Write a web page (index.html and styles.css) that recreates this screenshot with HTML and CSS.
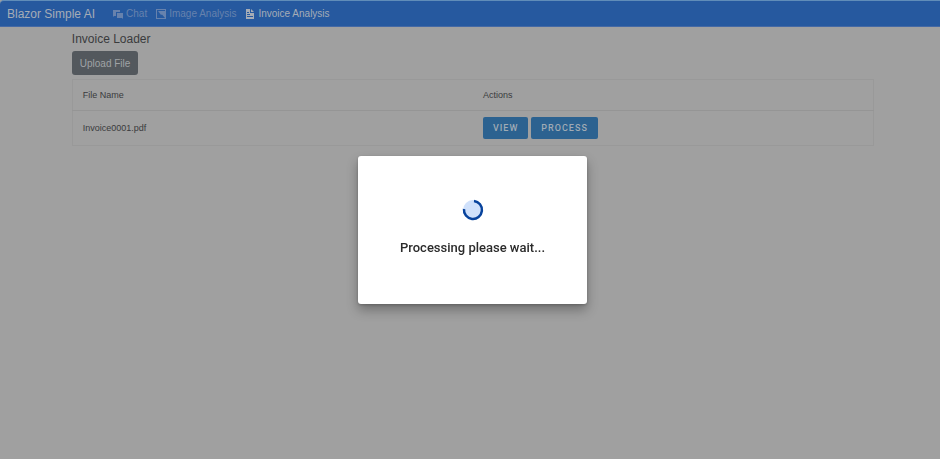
FILE: index.html
```html
<!DOCTYPE html>
<html lang="en">
<head>
<meta charset="utf-8">
<meta name="viewport" content="width=device-width, initial-scale=1">
<title>Blazor Simple AI</title>
<link rel="stylesheet" href="styles.css">
</head>
<body>
<header class="topbar">
  <a class="brand" href="#">Blazor Simple AI</a>
  <nav class="nav">
    <a class="nav-link" href="#">
      <svg class="icon" viewBox="0 0 12 12" aria-hidden="true"><path fill="currentColor" d="M1 2h7v2H4v4H2L1 9zM5 5h6v6l-1-1H5z"/></svg>
      Chat</a>
    <a class="nav-link" href="#">
      <svg class="icon" viewBox="0 0 12 12" aria-hidden="true"><path fill="currentColor" fill-rule="evenodd" d="M1 1h10v10H1zM2 2v8h8V2z"/><path fill="currentColor" d="M3 3h7v7L7 6.500 6 7z"/></svg>
      Image Analysis</a>
    <a class="nav-link active" href="#" aria-current="page">
      <svg class="icon" viewBox="0 0 12 12" aria-hidden="true"><path fill="currentColor" fill-rule="evenodd" d="M2 1h4v4h4v6H2zM3 4v1h2V4zM3 6v1h3V6zM3 8v1h6V8z"/><path fill="currentColor" d="M7 1l3 3H7z"/></svg>
      Invoice Analysis</a>
  </nav>
</header>
<main class="container">
  <h1 class="title">Invoice Loader</h1>
  <button class="upload" type="button">Upload File</button>
  <table class="files">
    <thead><tr><th scope="col">File Name</th><th scope="col">Actions</th></tr></thead>
    <tbody><tr>
      <td>Invoice0001.pdf</td>
      <td><div class="actions"><button class="action" type="button">VIEW</button><button class="action" type="button">PROCESS</button></div></td>
    </tr></tbody>
  </table>
</main>
<div class="overlay">
  <div class="dialog" role="dialog" aria-modal="true" aria-labelledby="message">
    <svg class="spinner" viewBox="0 0 22 22" aria-hidden="true"><circle cx="11" cy="11" r="10" fill="#d0e1fb"/><path d="M12 2a9 9 0 1 1-10 8" fill="none" stroke="#08439c" stroke-width="2.500"/></svg>
    <p class="message" id="message">Processing please wait...</p>
  </div>
</div>
</body>
</html>
```
FILE: styles.css
```css
* {
  box-sizing: border-box;
}

body {
  margin: 0;
  min-height: 100vh;
  background: #a0a0a0;
  color: #3a3b3d;
  font-family: "Liberation Sans", Arial, sans-serif;
}

a {
  color: inherit;
  text-decoration: none;
}

.topbar {
  display: flex;
  align-items: center;
  gap: 17px;
  height: 27px;
  padding: 0 7px;
  border-top: 1px solid #608db9;
  border-bottom: 1px solid #4469a5;
  border-top-left-radius: 4px;
  background: #26599f;
  color: #a5acb6;
}

.brand {
  font-size: 12px;
}

.nav {
  display: flex;
  gap: 8px;
  font-size: 10px;
}

.nav-link {
  display: flex;
  align-items: center;
  gap: 2px;
  color: #6782ad;
  white-space: nowrap;
}

.nav-link.active {
  color: #a5acb6;
}

.icon {
  width: 12px;
  height: 12px;
}

.container {
  width: 86%;
  padding: 4px 0 4px 6px;
  margin: 0 auto;
}

.title {
  margin: 0 0 4px;
  font-size: 12px;
  font-weight: 400;
  line-height: 16px;
}

.upload {
  display: block;
  height: 24px;
  padding: 0 8px;
  border: 0;
  border-radius: 3px;
  background: #53585d;
  color: #a0a3a6;
  font: 10px "Liberation Sans", Arial, sans-serif;
}

.files {
  width: 100%;
  margin-top: 4px;
  border: 1px solid #999;
  border-collapse: collapse;
  table-layout: fixed;
  font-size: 9px;
}

.files th,
.files td {
  padding: 0 10px;
  font-weight: 400;
  text-align: left;
}

.files th {
  height: 31px;
  border-bottom: 1px solid #959595;
}

.files td {
  height: 35px;
}

.actions {
  display: flex;
  gap: 3px;
}

.action {
  height: 22px;
  padding: 0 10px;
  border: 0;
  border-radius: 2px;
  background: #2c6290;
  color: #a0abb5;
  font: 500 9px Roboto, sans-serif;
  letter-spacing: 1px;
}

.overlay {
  position: fixed;
  inset: 0;
  display: flex;
  align-items: center;
  justify-content: center;
  padding-left: 5px;
}

.dialog {
  display: flex;
  flex-direction: column;
  align-items: center;
  gap: 19px;
  padding: 43px 42px 48px;
  border-radius: 3px;
  background: #fff;
  box-shadow: 0 6px 12px rgba(0, 0, 0, 0.3), 0 1px 3px rgba(0, 0, 0, 0.2);
}

.spinner {
  width: 22px;
  height: 22px;
}

.message {
  margin: 0;
  color: #2b2b2b;
  font: 500 13px/16px Roboto, sans-serif;
}
```
